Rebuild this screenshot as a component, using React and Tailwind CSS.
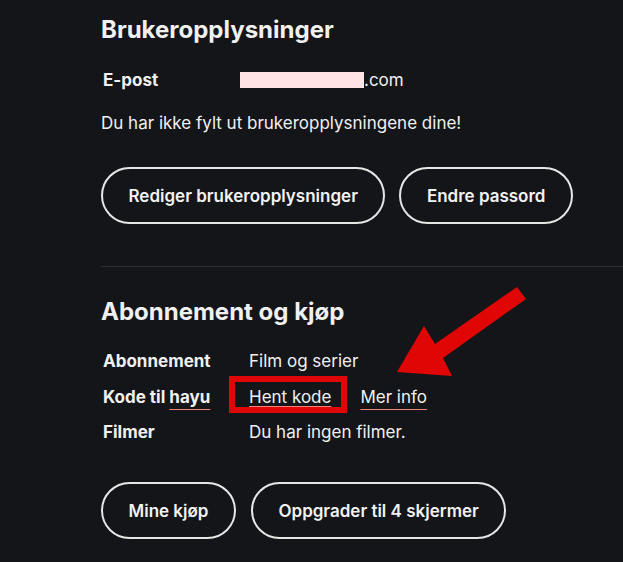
import React from 'react';

const font = { fontFamily: 'Inter, "Noto Sans", sans-serif' };

function PillButton({ children }) {
  return (
    <button
      type="button"
      className="h-[57px] px-[25.5px] rounded-full border-2 border-[#e6e6e6] text-[17px] font-semibold text-[#f2f2f2] leading-6 whitespace-nowrap"
    >
      {children}
    </button>
  );
}

function Arrow() {
  return (
    <svg className="absolute left-0 top-0 pointer-events-none" width="623" height="562" viewBox="0 0 623 562">
      <polygon
        points="397,372 424,326 435,344 517,287 526,299 443,358 452,376"
        fill="#e00606"
      />
    </svg>
  );
}

export default function App() {
  return (
    <div className="relative w-[623px] h-[562px] overflow-hidden bg-[#141518] text-[#f0f0f0]" style={font}>
      <div className="pl-[101px]">
        {/* Brukeropplysninger */}
        <section className="pt-[14px]">
          <h2 className="text-[24px] leading-8 font-bold">Brukeropplysninger</h2>
          <div className="mt-[22px] flex text-[17px] leading-6">
            <span className="w-[139px] pl-[2px] font-bold">E-post</span>
            <span className="flex items-center">
              <span className="inline-block w-[124px] h-[16px] bg-[#ffe4e4]" />
              .com
            </span>
          </div>
          <p className="mt-[19px] text-[17px] leading-6">Du har ikke fylt ut brukeropplysningene dine!</p>
          <div className="mt-[32px] flex gap-[14px]">
            <PillButton>Rediger brukeropplysninger</PillButton>
            <PillButton>Endre passord</PillButton>
          </div>
        </section>

        <div className="mt-[42px] h-px bg-[#2d2e31]" />

        {/* Abonnement og kjøp */}
        <section className="pt-[29px]">
          <h2 className="text-[24px] leading-8 font-bold">Abonnement og kjøp</h2>
          <div className="mt-[21px] flex flex-col gap-[11.5px] text-[17px] leading-6">
            <div className="flex h-6">
              <span className="w-[148px] pl-[2px] font-bold">Abonnement</span>
              <span>Film og serier</span>
            </div>
            <div className="flex h-6">
              <span className="w-[148px] pl-[2px] font-bold">
                Kode til{' '}
                <span className="underline decoration-[#f2857b] decoration-1 underline-offset-[6px]">hayu</span>
              </span>
              <span className="flex items-center">
                <span className="underline decoration-[#f2857b] decoration-1 underline-offset-[3px]">Hent kode</span>
                <span className="mx-[14px] w-px h-[20px] bg-[#8a8a8a]" />
                <span className="underline decoration-[#f2857b] decoration-1 underline-offset-[6px]">Mer info</span>
              </span>
            </div>
            <div className="flex h-6">
              <span className="w-[148px] pl-[2px] font-bold">Filmer</span>
              <span>Du har ingen filmer.</span>
            </div>
          </div>
          <div className="mt-[38px] flex gap-[15px]">
            <PillButton>Mine kjøp</PillButton>
            <PillButton>Oppgrader til 4 skjermer</PillButton>
          </div>
        </section>
      </div>

      {/* annotation */}
      <div className="absolute left-[229px] top-[376px] w-[118px] h-[37px] border-[6px] border-[#e00606]" />
      <Arrow />
    </div>
  );
}
